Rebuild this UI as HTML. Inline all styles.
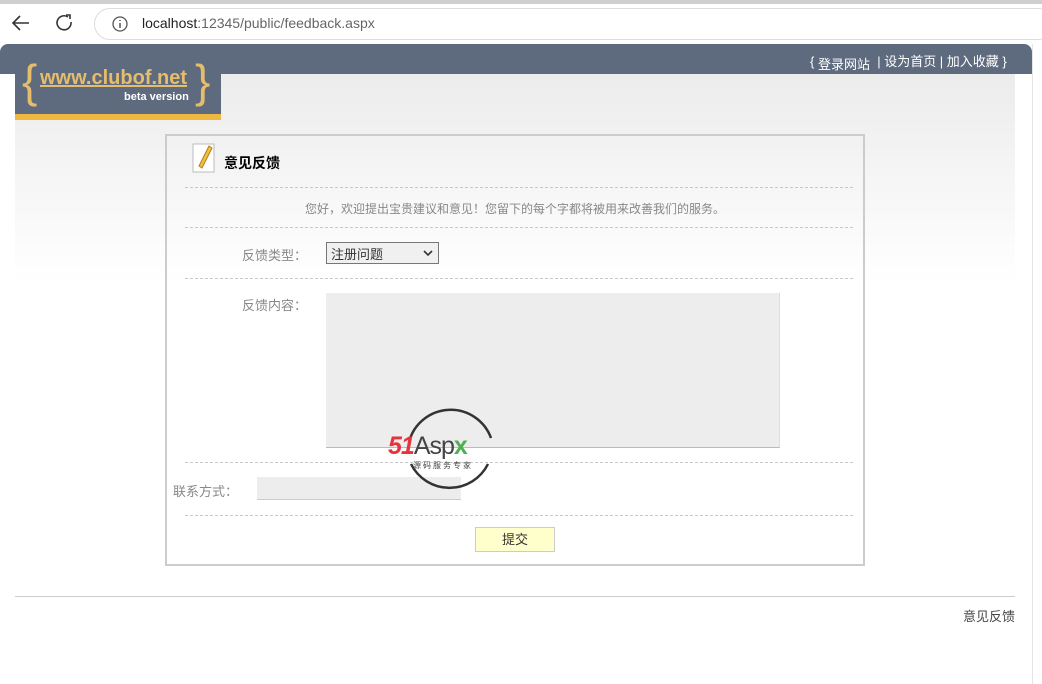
<!DOCTYPE html>
<html><head><meta charset="utf-8"><style>
*{margin:0;padding:0;box-sizing:border-box}
body{width:1042px;height:684px;overflow:hidden;background:#fff;font-family:"Liberation Sans","Noto Sans CJK SC",sans-serif;font-size:13px;position:relative;color:#888}
.a{position:absolute}
.dash{position:absolute;left:185px;width:668px;border-top:1px dashed #c8c8c8}
</style></head><body>
<div class="a" style="left:0;top:0;width:1042px;height:4px;background:#cfcfcf"></div>
<div class="a" style="left:0;top:4px;width:1042px;height:40px;background:#fff"></div>
<svg class="a" style="left:10px;top:13px" width="22" height="20"><path d="M19 10H3M10 3L3 10l7 7" stroke="#333" stroke-width="1.6" fill="none"/></svg>
<svg class="a" style="left:55px;top:13px" width="20" height="20"><path d="M16 9A7 7 0 1 1 13 4" stroke="#333" stroke-width="1.6" fill="none"/><path d="M11 2h4v4" stroke="#333" stroke-width="1.6" fill="none"/></svg>
<div class="a" style="left:94px;top:8px;width:960px;height:32px;border:1px solid #ddd;border-radius:16px"></div>
<svg class="a" style="left:111px;top:15px" width="18" height="18"><circle cx="9" cy="9" r="7" stroke="#555" stroke-width="1.3" fill="none"/><path d="M9 8v5M9 5v1" stroke="#555" stroke-width="1.5"/></svg>
<div class="a" style="left:142px;top:15px;font-size:14px;color:#222">localhost<span style="color:#666">:12345/public/feedback.aspx</span></div>
<div class="a" style="left:0;top:44px;width:1032px;height:30px;background:#5e6a7e;border-radius:8px 8px 0 0"></div>
<div class="a" style="left:1032px;top:44px;width:10px;height:640px;background:#fff;border-left:1px solid #e5e5e5"></div>
<div class="a" style="left:810px;top:51px;color:#fff;font-size:13px;white-space:nowrap">{ <span style="position:relative;top:3px">登录网站</span> &nbsp;| 设为首页 | 加入收藏 }</div>
<div class="a" style="left:15px;top:74px;width:1000px;height:210px;background:linear-gradient(#ececec,#fff)"></div>
<div class="a" style="left:15px;top:74px;width:206px;height:40px;background:#5e6a7e"></div>
<div class="a" style="left:15px;top:114px;width:206px;height:6px;background:#f0b840"></div>
<div class="a" style="left:22px;top:54px;font-size:46px;color:#e6bd6a">{</div>
<div class="a" style="left:195px;top:54px;font-size:46px;color:#e6bd6a">}</div>
<div class="a" style="left:40px;top:67px;font-size:20px;color:#e6bd6a;font-weight:bold;text-decoration:underline">www.clubof.net</div>
<div class="a" style="left:124px;top:91px;font-size:11px;color:#fff;font-weight:bold">beta version</div>
<div class="a" style="left:165px;top:134px;width:700px;height:432px;border:2px solid #ccc"></div>
<svg class="a" style="left:191px;top:142px" width="26" height="32"><rect x="2" y="2" width="21" height="28" fill="#fff" stroke="#bbb"/><path d="M8 24L18 4l3 2-10 20z" fill="#f0c040" stroke="#b08020"/></svg>
<div class="a" style="left:224px;top:153px;font-size:14px;color:#000;font-weight:bold">意见反馈</div>
<div class="dash" style="top:187px"></div>
<div class="a" style="left:305px;top:200px;font-size:12px;color:#888">您好，欢迎提出宝贵建议和意见！您留下的每个字都将被用来改善我们的服务。</div>
<div class="dash" style="top:227px"></div>
<div class="a" style="left:242px;top:245px">反馈类型：</div>
<div class="a" style="left:326px;top:242px;width:113px;height:22px;border:1px solid #777;background:#f0f0f0;color:#333;font-size:13px;padding:1px 4px">注册问题<svg style="position:absolute;right:5px;top:7px" width="10" height="7"><path d="M1 1l4 4 4-4" stroke="#333" stroke-width="1.6" fill="none"/></svg></div>
<div class="dash" style="top:278px"></div>
<div class="a" style="left:242px;top:295px">反馈内容：</div>
<div class="a" style="left:326px;top:293px;width:454px;height:155px;background:#ededed;border-bottom:1px solid #bbb;border-right:1px solid #ddd"></div>
<div class="dash" style="top:462px"></div>
<div class="a" style="left:173px;top:481px">联系方式：</div>
<div class="a" style="left:257px;top:477px;width:204px;height:23px;background:#ededed;border-bottom:1px solid #ccc"></div>
<div class="dash" style="top:515px"></div>
<div class="a" style="left:475px;top:527px;width:80px;height:25px;background:#ffffcc;border:1px solid #ccc;color:#333;text-align:center;line-height:23px">提交</div>
<svg class="a" style="left:395px;top:402px" width="110" height="96"><path d="M14 40A43 43 0 0 1 96 36M93 62A43 43 0 0 1 16 62" stroke="#333" stroke-width="2.5" fill="none"/></svg>
<div class="a" style="left:388px;top:432px;font-size:25px;font-weight:bold;font-style:italic;color:#e8323c;letter-spacing:-1px">51<span style="color:#444;font-style:normal;font-weight:normal">Asp</span><span style="color:#4caf50;font-style:normal">x</span></div>
<div class="a" style="left:413px;top:460px;font-size:8px;color:#444;letter-spacing:2px">源码服务专家</div>
<div class="a" style="left:15px;top:596px;width:1000px;border-top:1px solid #ccc"></div>
<div class="a" style="left:963px;top:606px;color:#444">意见反馈</div>
</body></html>
